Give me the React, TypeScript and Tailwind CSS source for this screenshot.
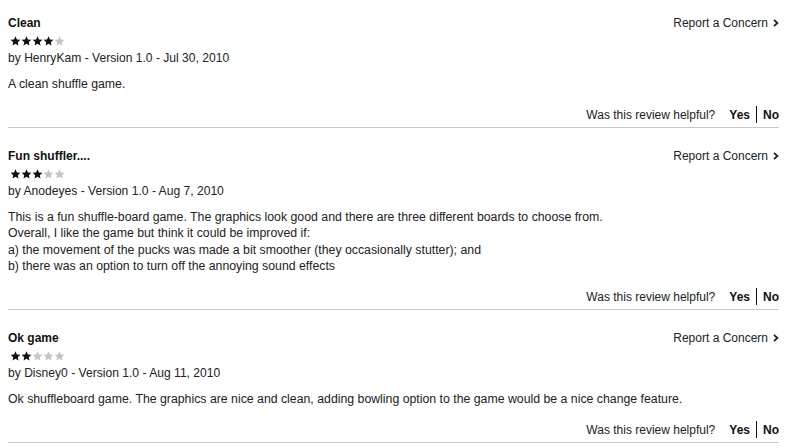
import React from "react";

type Review = {
  title: string;
  stars: number;
  author: string;
  date: string;
  body: string[];
};

const reviews: Review[] = [
  {
    title: "Clean",
    stars: 4,
    author: "HenryKam",
    date: "Jul 30, 2010",
    body: ["A clean shuffle game."],
  },
  {
    title: "Fun shuffler....",
    stars: 3,
    author: "Anodeyes",
    date: "Aug 7, 2010",
    body: [
      "This is a fun shuffle-board game. The graphics look good and there are three different boards to choose from.",
      "Overall, I like the game but think it could be improved if:",
      "a) the movement of the pucks was made a bit smoother (they occasionally stutter); and",
      "b) there was an option to turn off the annoying sound effects",
    ],
  },
  {
    title: "Ok game",
    stars: 2,
    author: "Disney0",
    date: "Aug 11, 2010",
    body: [
      "Ok shuffleboard game. The graphics are nice and clean, adding bowling option to the game would be a nice change feature.",
    ],
  },
];

function Star({ filled }: { filled: boolean }) {
  return (
    <svg width="11" height="10" viewBox="0 0 24 23" className="block">
      <path
        d="M12 0.8l3.3 7.2 7.9 0.8-5.9 5.3 1.7 7.8L12 17.9l-6.9 4 1.7-7.8L0.8 8.8l7.9-0.8z"
        fill={filled ? "#111111" : "#c4c4c4"}
      />
    </svg>
  );
}

function Chevron() {
  return (
    <svg width="6" height="8" viewBox="0 0 6 8" className="ml-[5px] block">
      <path d="M1 0.8L4.4 4 1 7.2" fill="none" stroke="#222" strokeWidth="1.8" />
    </svg>
  );
}

function ReviewBlock({ r, first }: { r: Review; first: boolean }) {
  return (
    <div className={first ? "pt-[15px]" : "pt-[20px]"}>
      <div className="flex items-center justify-between leading-[16px]">
        <div className="font-bold text-[#111]">{r.title}</div>
        <div className="flex items-center text-[#222]">
          <span>Report a Concern</span>
          <Chevron />
        </div>
      </div>
      <div className="flex h-[19px] items-center pl-[2px]">
        {[0, 1, 2, 3, 4].map((i) => (
          <Star key={i} filled={i < r.stars} />
        ))}
      </div>
      <div className="text-[12.1px] leading-[16px] text-[#222]">
        by {r.author} - Version 1.0 - {r.date}
      </div>
      <div className="mt-[10px] text-[12.3px] leading-[16.2px] text-[#222]">
        {r.body.map((line, i) => (
          <div key={i}>{line}</div>
        ))}
      </div>
      <div className="mt-[14px] flex items-center justify-end leading-[16px] text-[#222]">
        <span>Was this review helpful?</span>
        <span className="ml-[14px] font-bold text-[#111]">Yes</span>
        <span className="mx-[6px] h-[17px] w-px bg-[#111]" />
        <span className="font-bold text-[#111]">No</span>
      </div>
      <div className="mt-[4px] h-px bg-[#c8c8c8]" />
    </div>
  );
}

export default function App() {
  return (
    <div
      className="h-[448px] w-[789px] overflow-hidden bg-white pl-[8px] pr-[10px] text-[12px]"
      style={{ fontFamily: '"Liberation Sans", Arial, sans-serif' }}
    >
      {reviews.map((r, i) => (
        <ReviewBlock key={i} r={r} first={i === 0} />
      ))}
    </div>
  );
}
